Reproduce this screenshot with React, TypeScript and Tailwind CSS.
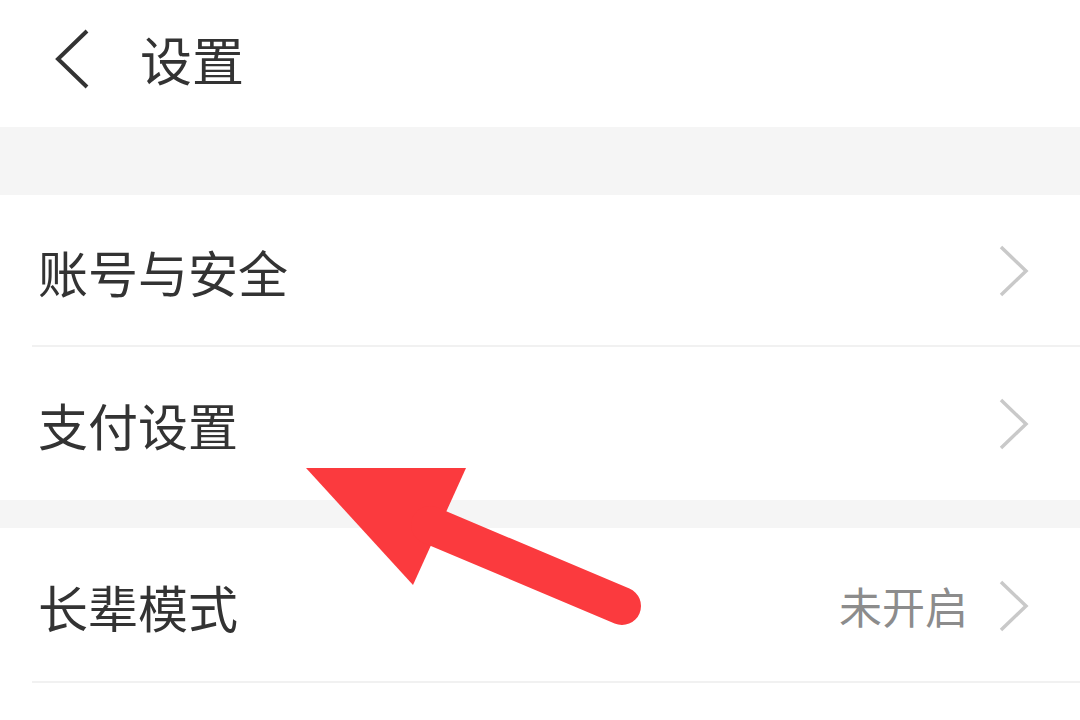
import React from "react";

const Chevron = () => (
  <svg width="32" height="52" viewBox="0 0 32 52" className="shrink-0">
    <path d="M3 2 L28 26 L3 50" fill="none" stroke="#c9c9c9" strokeWidth="3.5" />
  </svg>
);

const Row = ({ label, value, divider, h }: { label: string; value?: string; divider?: boolean; h: string }) => (
  <div className={`relative flex items-center justify-between bg-white pl-[38px] pr-[50px] ${h}`}>
    <span className="text-[50px] leading-none text-[#333333]">{label}</span>
    <div className="flex items-center gap-[30px]">
      {value && <span className="text-[43px] leading-none text-[#8c8c8c]">{value}</span>}
      <Chevron />
    </div>
    {divider && <div className="absolute bottom-0 left-[32px] right-0 h-[2px] bg-[#f1f1f1]" />}
  </div>
);

export default function App() {
  return (
    <div
      className="relative w-[1080px] h-[720px] overflow-hidden bg-white"
      style={{ fontFamily: '"Noto Sans CJK SC", "Noto Sans", sans-serif' }}
    >
      <div className="flex h-[127px] items-center bg-white pl-[54px] pb-[10px]">
        <svg width="36" height="60" viewBox="0 0 36 60">
          <path d="M33 2 L4 30 L33 58" fill="none" stroke="#333333" strokeWidth="4" />
        </svg>
        <span className="ml-[50px] text-[52px] leading-none text-[#333333]">设置</span>
      </div>
      <div className="h-[68px] bg-[#f5f5f5]" />
      <Row label="账号与安全" divider h="h-[152px]" />
      <Row label="支付设置" h="h-[153px]" />
      <div className="h-[28px] bg-[#f5f5f5]" />
      <Row label="长辈模式" value="未开启" divider h="h-[155px]" />
      <div className="bg-white h-[40px]" />
      <svg className="absolute left-0 top-0" width="1080" height="720" viewBox="0 0 1080 720">
        <polygon points="306,468 466,468 413,585" fill="#fb3a3e" />
        <line x1="430" y1="525" x2="622" y2="606" stroke="#fb3a3e" strokeWidth="38" strokeLinecap="round" />
      </svg>
    </div>
  );
}
